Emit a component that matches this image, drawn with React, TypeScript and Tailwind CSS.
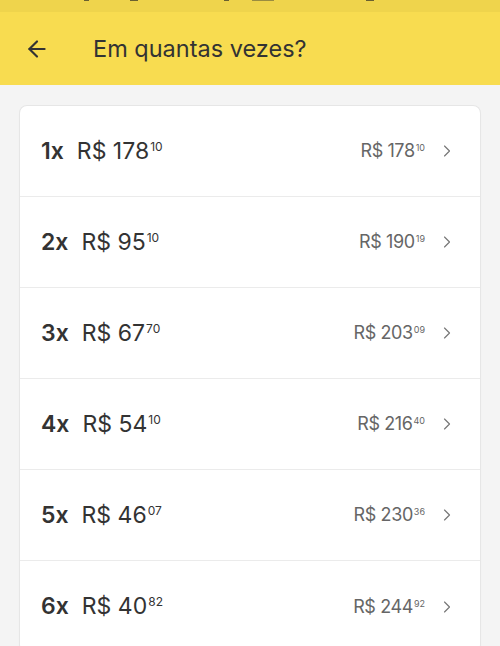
import { ArrowLeft, ChevronRight } from 'lucide-react'

type Installment = {
  count: number
  value: [string, string]
  total: [string, string]
}

const INSTALLMENTS: Installment[] = [
  { count: 1, value: ['178', '10'], total: ['178', '10'] },
  { count: 2, value: ['95', '10'], total: ['190', '19'] },
  { count: 3, value: ['67', '70'], total: ['203', '09'] },
  { count: 4, value: ['54', '10'], total: ['216', '40'] },
  { count: 5, value: ['46', '07'], total: ['230', '36'] },
  { count: 6, value: ['40', '82'], total: ['244', '92'] },
]

function InstallmentRow({ item, last }: { item: Installment; last: boolean }) {
  return (
    <button
      type="button"
      className={`flex h-[91px] w-full items-center pl-[21px] pr-[23px] text-left ${last ? '' : 'border-b border-[#ebebeb]'}`}
    >
      <span className="flex flex-1 items-start text-[23px] leading-none text-[#333]">
        <span className="mr-[13px] font-semibold">{item.count}x</span>
        <span>R$ {item.value[0]}</span>
        <span className="ml-[1px] mt-[1px] text-[12px]">{item.value[1]}</span>
      </span>
      <span className="flex items-start text-[18px] leading-none tracking-[-0.4px] text-[#666]">
        <span>R$ {item.total[0]}</span>
        <span className="ml-[1px] mt-[1px] text-[9px] tracking-normal">{item.total[1]}</span>
      </span>
      <ChevronRight className="ml-[12px] size-[20px] text-[#777]" strokeWidth={1.4} />
    </button>
  )
}

export default function App() {
  return (
    <div className="min-h-[646px] bg-[#f4f4f4] font-['Inter','Liberation_Sans',sans-serif]">
      {/* Status bar (clipped) */}
      <div className="relative h-[12px] bg-[#efd44c]">
        <span className="absolute left-[84px] top-0 h-[1px] w-[5px] bg-[#6a6030]" />
        <span className="absolute left-[130px] top-0 h-[1px] w-[8px] bg-[#6a6030]" />
        <span className="absolute left-[224px] top-0 h-[1px] w-[5px] bg-[#6a6030]" />
        <span className="absolute left-[252px] top-0 h-[1px] w-[22px] bg-[#9a8c40]" />
        <span className="absolute left-[366px] top-0 h-[1px] w-[8px] bg-[#6a6030]" />
      </div>

      {/* Header */}
      <header className="flex h-[73px] items-center bg-[#f8dc50]">
        <ArrowLeft className="ml-[24px] size-[26px] text-[#333]" strokeWidth={2} />
        <h1 className="ml-[43px] text-[23.5px] text-[#333]">Em quantas vezes?</h1>
      </header>

      <div className="px-[20px] pt-[21px]">
        <div className="overflow-hidden rounded-[7px] bg-white shadow-[0_0_0_1px_#e6e6e6,0_1px_2px_rgba(0,0,0,0.08)]">
          {INSTALLMENTS.map((item, index) => (
            <InstallmentRow key={item.count} item={item} last={index === INSTALLMENTS.length - 1} />
          ))}
        </div>
      </div>
    </div>
  )
}
